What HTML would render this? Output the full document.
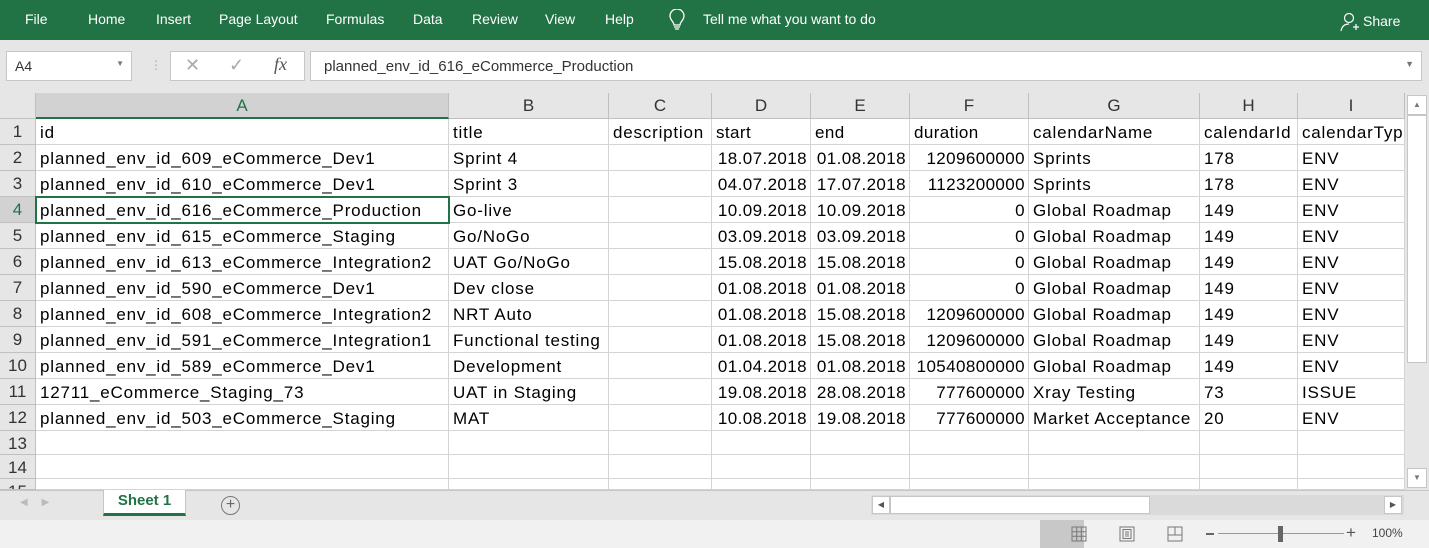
<!DOCTYPE html>
<html><head><style>
*{margin:0;padding:0;box-sizing:border-box}
body{width:1429px;height:548px;overflow:hidden;background:#fff;font-family:"Liberation Sans",sans-serif;position:relative}
.rib{position:absolute;left:0;top:0;width:1429px;height:40px;background:#217346;color:#fff;font-size:14px}
.rib span{position:absolute;top:11px}
.fb{position:absolute;left:0;top:40px;width:1429px;height:53px;background:#e6e6e6}
.box{position:absolute;background:#fff;border:1px solid #c6c6c6}
.grid{position:absolute;left:0;top:93px}
.c{position:absolute;font-size:17px;color:#000;white-space:nowrap;overflow:hidden;border-right:1px solid #d4d4d4;border-bottom:1px solid #d4d4d4;padding:3px 3px 0 4px;line-height:22px;letter-spacing:0.8px}
.h{background:#e6e6e6;color:#333;text-align:center;border-right:1px solid #c0c0c0;border-bottom:1px solid #c0c0c0;padding:2px 0 0 0;font-size:17px;letter-spacing:0}
.r{text-align:right}
.tabs{position:absolute;left:0;top:490px;width:1429px;height:30px;background:#e6e6e6;border-top:1px solid #c6c6c6}
.status{position:absolute;left:0;top:520px;width:1429px;height:28px;background:#f1f1f1}
</style></head><body>
<div class="rib">
<span style="left:25px">File</span><span style="left:88px">Home</span><span style="left:156px">Insert</span><span style="left:219px">Page Layout</span><span style="left:326px">Formulas</span><span style="left:413px">Data</span><span style="left:472px">Review</span><span style="left:545px">View</span><span style="left:605px">Help</span>
<svg style="position:absolute;left:669px;top:9px" width="16" height="22" viewBox="0 0 16 22"><path d="M5 16c0-3-4-5-4-9a7 7 0 0 1 14 0c0 4-4 6-4 9z M5 18h6 M6 20h4" fill="none" stroke="#fff" stroke-width="1.3"/></svg>
<span style="left:703px">Tell me what you want to do</span>
<svg style="position:absolute;left:1340px;top:12px" width="20" height="20" viewBox="0 0 20 20"><circle cx="9" cy="6" r="4.5" fill="none" stroke="#fff" stroke-width="1.2"/><path d="M1 19c1-5 4-7 8-7 M13 15h6 M16 12v6" fill="none" stroke="#fff" stroke-width="1.2"/></svg>
<span style="left:1363px;top:13px">Share</span>
</div>
<div class="fb">
<div class="box" style="left:6px;top:11px;width:126px;height:30px;font-size:14px;padding:6px 8px;color:#333">A4<span style="position:absolute;right:7px;top:7px;font-size:8px;color:#777">▼</span></div>
<div style="position:absolute;left:150px;top:18px;color:#aaa;font-size:12px">⋮</div>
<div class="box" style="left:170px;top:11px;width:135px;height:30px;color:#aaa;font-size:18px"><span style="position:absolute;left:14px;top:3px">✕</span><span style="position:absolute;left:58px;top:3px">✓</span><span style="position:absolute;left:103px;top:2px;font-family:'Liberation Serif',serif;font-style:italic;color:#555">fx</span></div>
<div class="box" style="left:310px;top:11px;width:1112px;height:30px;font-size:15px;padding:6px 13px;color:#333">planned_env_id_616_eCommerce_Production<span style="position:absolute;right:7px;top:7px;font-size:9px;color:#777">▼</span></div>
</div>
<div class="grid" id="g"></div>
<div style="position:absolute;left:1405px;top:93px;width:24px;height:397px;background:#e6e6e6"><div style="position:absolute;left:2px;top:2px;width:20px;height:20px;background:#fff;border:1px solid #c6c6c6;font-size:8px;color:#777;text-align:center;line-height:18px">▲</div><div style="position:absolute;left:2px;top:22px;width:20px;height:248px;background:#fff;border:1px solid #c6c6c6"></div><div style="position:absolute;left:2px;top:375px;width:20px;height:20px;background:#fff;border:1px solid #c6c6c6;font-size:8px;color:#777;text-align:center;line-height:18px">▼</div></div>
<div class="tabs">
<span style="position:absolute;left:20px;top:6px;color:#bbb;font-size:10px">◀&nbsp;&nbsp;&nbsp;&nbsp;&nbsp;▶</span>
<div style="position:absolute;left:103px;top:-1px;width:83px;height:26px;background:#fff;border:1px solid #c6c6c6;border-top:none;border-bottom:3px solid #217346;color:#217346;font-weight:bold;font-size:15px;text-align:center;padding-top:2px">Sheet 1</div>
<div style="position:absolute;left:221px;top:5px;width:19px;height:19px;border:1px solid #777;border-radius:50%;text-align:center;line-height:16px;color:#666;font-size:16px">+</div>
<div style="position:absolute;left:871px;top:4px;width:533px;height:20px;background:#dadada"></div>
<div style="position:absolute;left:872px;top:5px;width:18px;height:18px;background:#fff;border:1px solid #c6c6c6;font-size:8px;color:#555;text-align:center;line-height:16px">◀</div>
<div style="position:absolute;left:890px;top:5px;width:260px;height:18px;background:#fff;border:1px solid #c6c6c6"></div>
<div style="position:absolute;left:1384px;top:5px;width:18px;height:18px;background:#fff;border:1px solid #c6c6c6;font-size:8px;color:#555;text-align:center;line-height:16px">▶</div>
</div>
<div class="status">
<div style="position:absolute;left:1040px;top:0;width:44px;height:28px;background:#c8c8c8"></div>
<svg style="position:absolute;left:1071px;top:6px" width="16" height="16"><path d="M1 1h14v14H1z M1 5.7h14 M1 10.3h14 M5.7 1v14 M10.3 1v14" fill="none" stroke="#777"/></svg>
<svg style="position:absolute;left:1119px;top:6px" width="16" height="16"><path d="M1 1h14v14H1z M4 3.5h8v9H4z M6 6h4 M6 8h4 M6 10h4" fill="none" stroke="#777"/></svg>
<svg style="position:absolute;left:1167px;top:6px" width="16" height="16"><path d="M1 1h14v14H1z M8 1v8H15 M1 9h7" fill="none" stroke="#777"/></svg>
<div style="position:absolute;left:1206px;top:13px;width:8px;height:2px;background:#666"></div>
<div style="position:absolute;left:1218px;top:13px;width:126px;height:1px;background:#999"></div>
<div style="position:absolute;left:1278px;top:6px;width:5px;height:16px;background:#666"></div>
<span style="position:absolute;left:1346px;top:3px;font-size:17px;color:#555">+</span>
<span style="position:absolute;left:1372px;top:6px;font-size:12px;color:#444">100%</span>
</div>
<script>
var cols=[36,449,609,712,811,910,1029,1200,1298,1405];
var L=['A','B','C','D','E','F','G','H','I'];
var data=[
['id','title','description','start','end','duration','calendarName','calendarId','calendarTyp'],
['planned_env_id_609_eCommerce_Dev1','Sprint 4','','18.07.2018','01.08.2018','1209600000','Sprints','178','ENV'],
['planned_env_id_610_eCommerce_Dev1','Sprint 3','','04.07.2018','17.07.2018','1123200000','Sprints','178','ENV'],
['planned_env_id_616_eCommerce_Production','Go-live','','10.09.2018','10.09.2018','0','Global Roadmap','149','ENV'],
['planned_env_id_615_eCommerce_Staging','Go/NoGo','','03.09.2018','03.09.2018','0','Global Roadmap','149','ENV'],
['planned_env_id_613_eCommerce_Integration2','UAT Go/NoGo','','15.08.2018','15.08.2018','0','Global Roadmap','149','ENV'],
['planned_env_id_590_eCommerce_Dev1','Dev close','','01.08.2018','01.08.2018','0','Global Roadmap','149','ENV'],
['planned_env_id_608_eCommerce_Integration2','NRT Auto','','01.08.2018','15.08.2018','1209600000','Global Roadmap','149','ENV'],
['planned_env_id_591_eCommerce_Integration1','Functional testing','','01.08.2018','15.08.2018','1209600000','Global Roadmap','149','ENV'],
['planned_env_id_589_eCommerce_Dev1','Development','','01.04.2018','01.08.2018','10540800000','Global Roadmap','149','ENV'],
['12711_eCommerce_Staging_73','UAT in Staging','','19.08.2018','28.08.2018','777600000','Xray Testing','73','ISSUE'],
['planned_env_id_503_eCommerce_Staging','MAT','','10.08.2018','19.08.2018','777600000','Market Acceptance','20','ENV'],
['','','','','','','','',''],['','','','','','','','',''],['','','','','','','','','']];
var h='';
h+='<div class="c h" style="left:0;top:0;width:36px;height:26px"></div>';
for(var j=0;j<9;j++){var bg=j==0?'background:#d2d2d2;border-bottom:2px solid #217346;color:#217346;':'';h+='<div class="c h" style="'+bg+'left:'+cols[j]+'px;top:0;width:'+(cols[j+1]-cols[j])+'px;height:26px">'+L[j]+'</div>';}
var y=26;
for(var i=0;i<data.length;i++){var rh=i>=12?24:26;if(i==14)rh=11;
var hs=i==3?'background:#d2d2d2;color:#217346;':'';
h+='<div class="c h" style="'+hs+'left:0;top:'+y+'px;width:36px;height:'+rh+'px;text-align:center;padding-top:2px">'+(i+1)+'</div>';
for(var j=0;j<9;j++){var r=(i>0&&j>=3&&j<=5)?' r':'';var ls=(j>=3&&j<=5)?'letter-spacing:0.4px;':'';
h+='<div class="c'+r+'" style="'+ls+'left:'+cols[j]+'px;top:'+y+'px;width:'+(cols[j+1]-cols[j])+'px;height:'+rh+'px">'+data[i][j]+'</div>';}
y+=rh;}
h+='<div style="position:absolute;left:35px;top:'+(26+3*26-1)+'px;width:415px;height:28px;border:2px solid #217346"></div>';
document.getElementById('g').innerHTML=h;
</script>
</body></html>
